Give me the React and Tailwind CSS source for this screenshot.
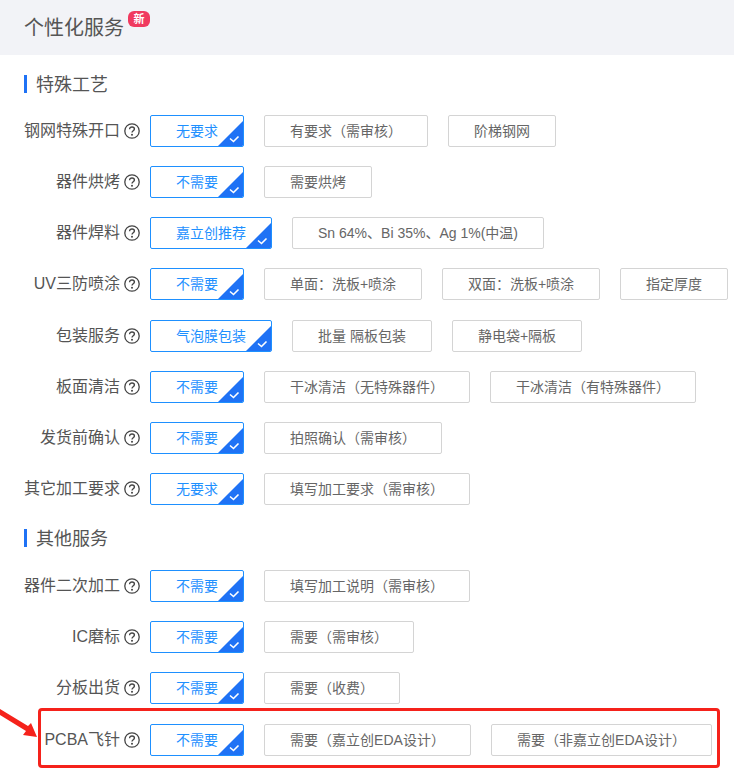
const Q = () => (
  <svg width="16" height="16" viewBox="0 0 16 16" className="shrink-0" fill="none">
    <circle cx="8" cy="8" r="7.2" stroke="#444" strokeWidth="1.3" />
    <path d="M5.6 6.2c0-1.4 1-2.2 2.4-2.2s2.4.8 2.4 2c0 1.8-2.4 1.8-2.4 3.6" stroke="#444" strokeWidth="1.4" />
    <circle cx="8" cy="11.8" r="1" fill="#444" />
  </svg>
);

const Selected = ({ w, text }) => (
  <div className={`relative h-8 ${w} shrink-0 flex items-center justify-center rounded-[2px] border border-[#1e90ff] text-[14px] text-[#1e90ff] bg-white overflow-hidden`}>
    {text}
    <svg className="absolute right-0 bottom-0" width="25" height="25" viewBox="0 0 25 25">
      <path d="M25 0V25H0Z" fill="#1f72f5" />
      <path d="M12 17.5l3.5 3 5-5" stroke="#fff" strokeWidth="1.6" fill="none" />
    </svg>
  </div>
);

const Opt = ({ w, text }) => (
  <div className={`h-8 ${w} shrink-0 flex items-center justify-center rounded-[2px] border border-[#d4d4d4] text-[14px] text-[#666] bg-white`}>
    {text}
  </div>
);

const Row = ({ label, sel, selW = "w-[94px]", opts, mb = "mb-[19px]" }) => (
  <div className={`flex items-center h-8 ${mb}`}>
    <div className="w-[120px] text-right text-[16px] text-[#555] whitespace-nowrap">{label}</div>
    <div className="ml-1 mr-2.5"><Q /></div>
    <div className="flex gap-5">
      <Selected w={selW} text={sel} />
      {opts.map(([w, t]) => <Opt key={t} w={w} text={t} />)}
    </div>
  </div>
);

const Heading = ({ children, className }) => (
  <div className={`flex items-center h-[18px] ml-6 ${className}`}>
    <div className="w-[3px] h-[18px] bg-[#1f72f5]" />
    <div className="ml-[9px] h-[18px] text-[18px] text-[#555] leading-[20px]">{children}</div>
  </div>
);

export default function App() {
  return (
    <div className="relative w-[734px] h-[777px] overflow-hidden bg-white font-['Liberation_Sans','Noto_Sans_CJK_SC',sans-serif]">
      <div className="h-[55px] bg-[#f2f3f7] flex items-center pl-6">
        <span className="text-[20px] text-[#555]">个性化服务</span>
        <span className="ml-[4px] mb-[17px] w-[22px] h-[16px] rounded-[6px] bg-[#f03a5f] text-white text-[11px] font-bold leading-[16px] text-center">新</span>
      </div>
      <Heading className="mt-5 mb-[22px]">特殊工艺</Heading>
      <Row label="钢网特殊开口" sel="无要求" opts={[["w-[164px]", "有要求（需审核）"], ["w-[108px]", "阶梯钢网"]]} />
      <Row label="器件烘烤" sel="不需要" opts={[["w-[108px]", "需要烘烤"]]} />
      <Row label="器件焊料" sel="嘉立创推荐" selW="w-[122px]" opts={[["w-[252px]", "Sn 64%、Bi 35%、Ag 1%(中温)"]]} />
      <Row label="UV三防喷涂" sel="不需要" mb="mb-5" opts={[["w-[158px]", "单面：洗板+喷涂"], ["w-[158px]", "双面：洗板+喷涂"], ["w-[108px]", "指定厚度"]]} />
      <Row label="包装服务" sel="气泡膜包装" selW="w-[122px]" opts={[["w-[140px]", "批量 隔板包装"], ["w-[130px]", "静电袋+隔板"]]} />
      <Row label="板面清洁" sel="不需要" opts={[["w-[206px]", "干冰清洁（无特殊器件）"], ["w-[206px]", "干冰清洁（有特殊器件）"]]} />
      <Row label="发货前确认" sel="不需要" opts={[["w-[178px]", "拍照确认（需审核）"]]} />
      <Row label="其它加工要求" sel="无要求" mb="mb-0" opts={[["w-[206px]", "填写加工要求（需审核）"]]} />
      <Heading className="mt-[24px] mb-[23px]">其他服务</Heading>
      <Row label="器件二次加工" sel="不需要" opts={[["w-[206px]", "填写加工说明（需审核）"]]} />
      <Row label="IC磨标" sel="不需要" opts={[["w-[150px]", "需要（需审核）"]]} />
      <Row label="分板出货" sel="不需要" mb="mb-5" opts={[["w-[136px]", "需要（收费）"]]} />
      <Row label="PCBA飞针" sel="不需要" mb="mb-0" opts={[["w-[207px]", "需要（嘉立创EDA设计）"], ["w-[221px]", "需要（非嘉立创EDA设计）"]]} />
      <div className="absolute left-[38px] top-[708px] w-[682px] h-[60px] border-[3px] border-[#f5221b] rounded-[4px]" />
      <svg className="absolute left-0 top-[700px]" width="40" height="45" viewBox="0 0 40 45">
        <path d="M0 9L28 26L31 23L37 37L23 35L26 31L0 15Z" fill="#f5221b" />
      </svg>
    </div>
  );
}
